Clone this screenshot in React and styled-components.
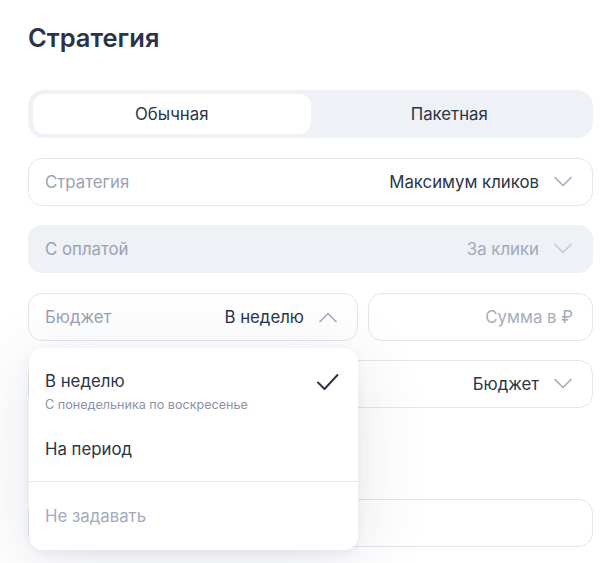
import React from "react";
import styled, { createGlobalStyle } from "styled-components";

const Global = createGlobalStyle`
  html, body { margin: 0; padding: 0; background: #fff; }
  body { font-family: Inter, "Noto Sans", sans-serif; color: #2b3447; -webkit-font-smoothing: antialiased; }
`;

const Page = styled.div`
  width: 615px;
  height: 563px;
  box-sizing: border-box;
  padding: 22px 22px 0 28px;
  overflow: hidden;
  display: flex;
  flex-direction: column;
`;

const Title = styled.h1`
  margin: 0;
  font-size: 25.5px;
  line-height: 32px;
  font-weight: 600;
  color: #2b3447;
`;

const Form = styled.div`
  margin-top: 36px;
  display: flex;
  flex-direction: column;
  gap: 19.5px;
`;

const Tabs = styled.div`
  display: grid;
  grid-template-columns: 1fr 1fr;
  height: 48px;
  box-sizing: border-box;
  padding: 4px 5px;
  background: #eef1f6;
  border-radius: 16px;
`;

const Tab = styled.div`
  display: flex;
  align-items: center;
  justify-content: center;
  border-radius: 12px;
  font-size: 16.8px;
  color: #2b3447;
  background: ${(p) => (p.$active ? "#fff" : "transparent")};
`;

const Field = styled.div`
  height: 48px;
  box-sizing: border-box;
  display: flex;
  align-items: center;
  padding: 0 19px 0 16px;
  border-radius: 14px;
  border: 1px solid ${(p) => (p.$disabled ? "#eef1f6" : "#e3e6ee")};
  background: ${(p) => (p.$disabled ? "#eef1f6" : "#fff")};
  font-size: 16.8px;
  flex: ${(p) => p.$flex || "none"};
`;

const Label = styled.span`
  color: #9ba2b4;
  flex: 1;
`;

const Value = styled.span`
  color: ${(p) => (p.$muted ? "#a2a9ba" : "#2b3447")};
  margin-right: 14px;
`;

const Placeholder = styled.span`
  flex: 1;
  text-align: right;
  color: #a6adbd;
`;

const Row = styled.div`
  display: flex;
  gap: 10px;
  position: relative;
`;

const Gap = styled.div`
  height: 91px;
  flex: none;
`;

const Menu = styled.div`
  position: absolute;
  top: 55px;
  left: 1px;
  width: 329px;
  box-sizing: border-box;
  padding: 8px 0;
  background: #fff;
  border-radius: 14px;
  box-shadow: 0 12px 70px rgba(40, 52, 90, 0.13), 0 3px 10px rgba(40, 52, 90, 0.06);
  z-index: 5;
`;

const Item = styled.div`
  display: flex;
  align-items: flex-start;
  padding: ${(p) => p.$pad || "15px 16px"};
`;

const ItemText = styled.div`
  flex: 1;
  display: flex;
  flex-direction: column;
`;

const ItemTitle = styled.span`
  font-size: 16.8px;
  line-height: 20px;
  color: ${(p) => (p.$muted ? "#a3aabb" : "#2b3447")};
`;

const ItemSub = styled.span`
  margin-top: 6px;
  font-size: 12.6px;
  line-height: 16px;
  color: #8a92a6;
`;

const Divider = styled.div`
  height: 1px;
  background: #e6e8f0;
  margin: 7px 0 8px;
`;

const Chevron = ({ up, color = "#a5adbf" }) => (
  <svg width="20" height="12" viewBox="0 0 20 12" fill="none">
    <path
      d={up ? "M2 10.5 L10 2.5 L18 10.5" : "M2 1.5 L10 9.5 L18 1.5"}
      stroke={color}
      strokeWidth="1.7"
      strokeLinecap="round"
      strokeLinejoin="round"
    />
  </svg>
);

const Check = () => (
  <svg width="24" height="20" viewBox="0 0 24 20" fill="none" style={{ marginTop: 2, marginRight: 2 }}>
    <path d="M2 9.5 L8.5 16 L21.5 2" stroke="#2b3447" strokeWidth="2" strokeLinecap="round" strokeLinejoin="round" />
  </svg>
);

export default function App() {
  return (
    <Page>
      <Global />
      <Title>Стратегия</Title>
      <Form>
        <Tabs>
          <Tab $active>Обычная</Tab>
          <Tab>Пакетная</Tab>
        </Tabs>
        <Field>
          <Label>Стратегия</Label>
          <Value>Максимум кликов</Value>
          <Chevron />
        </Field>
        <Field $disabled>
          <Label>С оплатой</Label>
          <Value $muted>За клики</Value>
          <Chevron color="#c6cbd7" />
        </Field>
        <Row>
          <Field style={{ width: 330 }}>
            <Label>Бюджет</Label>
            <Value>В неделю</Value>
            <Chevron up />
          </Field>
          <Field $flex="1">
            <Placeholder>Сумма в ₽</Placeholder>
          </Field>
          <Menu>
            <Item $pad="15px 16px 12px">
              <ItemText>
                <ItemTitle>В неделю</ItemTitle>
                <ItemSub>С понедельника по воскресенье</ItemSub>
              </ItemText>
              <Check />
            </Item>
            <Item $pad="14px 16px 15px">
              <ItemText>
                <ItemTitle>На период</ItemTitle>
              </ItemText>
            </Item>
            <Divider />
            <Item $pad="16px 16px 16px">
              <ItemText>
                <ItemTitle $muted>Не задавать</ItemTitle>
              </ItemText>
            </Item>
          </Menu>
        </Row>
        <Field>
          <Label />
          <Value>Бюджет</Value>
          <Chevron />
        </Field>
      </Form>
      <Gap />
      <Field />
    </Page>
  );
}
